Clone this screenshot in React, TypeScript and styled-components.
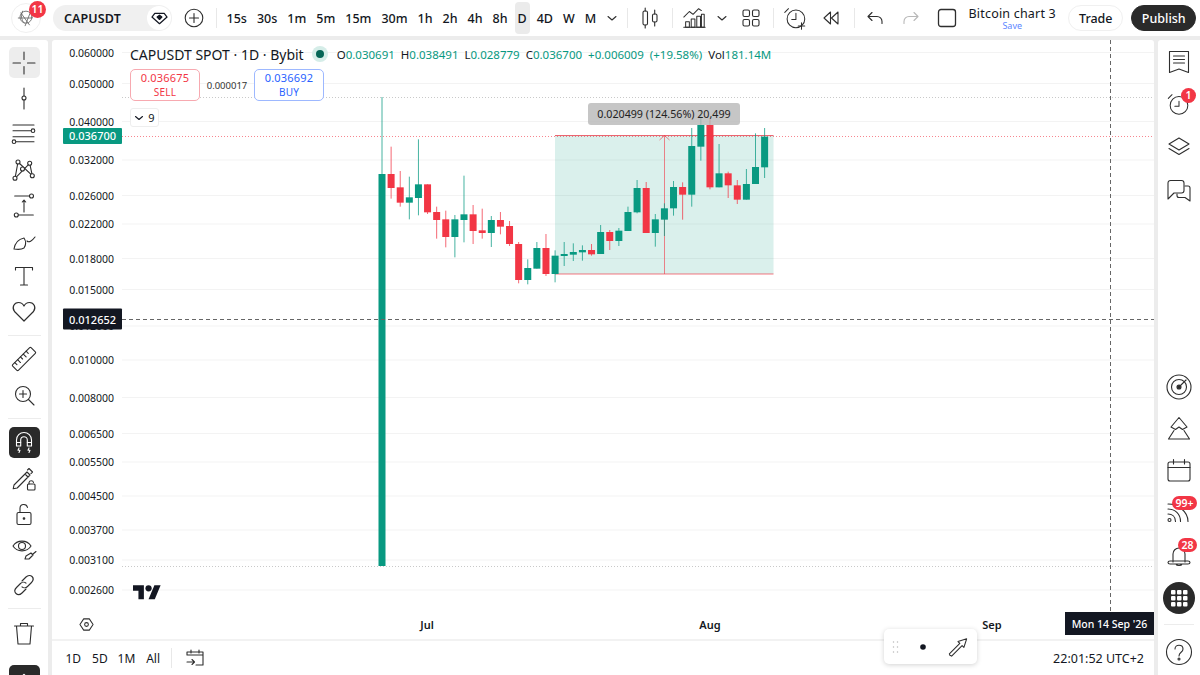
import React from "react";
import styled, { createGlobalStyle } from "styled-components";

const GREEN = "#089981";
const RED = "#f23645";
const INK = "#2e2e2e";
const FONT = `"Noto Sans", "Open Sans", sans-serif`;

// candle values are y positions read off the picture at 3x, relative to y=90
type Candle = [0 | 1, number, number, number, number];
const candles: Candle[] = [
    [1, 252, 1428, 21, 1428],
    [0, 252, 294, 170, 326],
    [0, 292, 338, 243, 350],
    [1, 322, 338, 260, 388],
    [1, 283, 324, 148, 376],
    [0, 283, 367, 283, 372],
    [0, 366, 390, 350, 446],
    [0, 388, 441, 362, 472],
    [1, 388, 441, 375, 502],
    [1, 373, 390, 257, 457],
    [0, 373, 423, 345, 462],
    [0, 421, 429, 356, 446],
    [1, 390, 429, 378, 471],
    [0, 390, 410, 366, 433],
    [0, 408, 462, 393, 468],
    [0, 462, 570, 456, 580],
    [1, 534, 570, 508, 583],
    [1, 474, 536, 456, 536],
    [0, 474, 552, 432, 558],
    [1, 497, 552, 481, 577],
    [1, 492, 498, 456, 528],
    [1, 486, 494, 460, 513],
    [1, 480, 487, 466, 512],
    [0, 480, 493, 462, 497],
    [1, 426, 492, 405, 492],
    [0, 426, 453, 420, 480],
    [1, 422, 453, 414, 468],
    [1, 366, 423, 350, 423],
    [1, 294, 367, 270, 370],
    [0, 294, 429, 276, 429],
    [1, 388, 429, 372, 470],
    [1, 355, 389, 340, 438],
    [1, 291, 355, 273, 377],
    [0, 291, 314, 277, 389],
    [1, 168, 314, 114, 350],
    [1, 105, 170, 60, 212],
    [0, 105, 292, 85, 298],
    [1, 250, 292, 162, 292],
    [0, 250, 286, 245, 324],
    [0, 286, 329, 270, 342],
    [1, 282, 329, 237, 329],
    [1, 231, 282, 130, 282],
    [1, 140, 232, 114, 264],
];

const ticks: [string, number][] = [
    ["0.060000", 52.5],
    ["0.050000", 83.5],
    ["0.040000", 121.5],
    ["0.032000", 160],
    ["0.026000", 195.5],
    ["0.022000", 224],
    ["0.018000", 258.5],
    ["0.015000", 289.5],
    ["0.012000", 326],
    ["0.010000", 360],
    ["0.008000", 397.5],
    ["0.006500", 433.5],
    ["0.005500", 462],
    ["0.004500", 496],
    ["0.003700", 530],
    ["0.003100", 560],
    ["0.002600", 590],
];

const intervals = ["15s", "30s", "1m", "5m", "15m", "30m", "1h", "2h", "4h", "8h", "D", "4D", "W", "M"];

const GlobalStyle = createGlobalStyle`
    html, body {
        margin: 0;
        height: 100%;
        background: #ececec;
        font-family: ${FONT};
        color: #131722;
        overflow: hidden;
    }
`;

const Page = styled.div`
    width: 1200px;
    height: 675px;
    display: flex;
    flex-direction: column;
    gap: 4px;
    background: #ececec;
    overflow: hidden;
`;

const TopBar = styled.header`
    height: 36px;
    flex: none;
    background: #fff;
    display: flex;
    align-items: center;
    font-size: 13px;
`;

const Avatar = styled.div`
    position: relative;
    width: 30px;
    height: 30px;
    margin-left: 11px;
    border-radius: 50%;
    border: 1px solid #f0f0f0;
    box-sizing: border-box;
    display: flex;
    align-items: center;
    justify-content: center;
    color: #666;
`;

const Badge = styled.span<{ $top: number; $right: number; $w: number; $h: number }>`
    position: absolute;
    top: ${(p) => p.$top}px;
    right: ${(p) => p.$right}px;
    min-width: ${(p) => p.$w}px;
    height: ${(p) => p.$h}px;
    border-radius: ${(p) => p.$h / 2}px;
    background: ${RED};
    color: #fff;
    font-size: 10.5px;
    font-weight: 600;
    line-height: ${(p) => p.$h}px;
    text-align: center;
`;

const SymbolPill = styled.div`
    width: 119px;
    height: 26px;
    margin-left: 12px;
    padding-left: 11px;
    box-sizing: border-box;
    border-radius: 13px;
    background: #f0f0f0;
    display: flex;
    align-items: center;
    justify-content: space-between;
    font-size: 12.5px;
    font-weight: 600;
    letter-spacing: 0.1px;
`;

const DiamondCap = styled.span`
    width: 24px;
    height: 24px;
    margin-right: 1px;
    border-radius: 50%;
    background: #fff;
    display: flex;
    align-items: center;
    justify-content: center;
`;

const Slot = styled.div<{ $w: number; $muted?: boolean }>`
    position: relative;
    width: ${(p) => p.$w}px;
    flex: none;
    display: flex;
    align-items: center;
    justify-content: center;
    color: ${(p) => (p.$muted ? "#b8b8b8" : INK)};
`;

const VSep = styled.i<{ $gap?: number }>`
    width: 1px;
    height: 20px;
    flex: none;
    margin: 0 ${(p) => p.$gap ?? 4}px;
    background: #e8e8e8;
`;

const IntervalList = styled.nav`
    display: flex;
    align-items: center;
    height: 100%;
    margin-left: 4.5px;
`;

const Interval = styled.span<{ $active?: boolean }>`
    height: 32px;
    padding: 0 ${(p) => (p.$active ? 3 : 5)}px;
    margin: 0 ${(p) => (p.$active ? 2 : 0)}px;
    border-radius: 4px;
    display: flex;
    align-items: center;
    background: ${(p) => (p.$active ? "#ebebeb" : "transparent")};
    font-weight: 500;
    font-size: 12.5px;
`;

const ChartTitle = styled.div`
    width: 98px;
    flex: none;
    text-align: center;
    line-height: 1;
    font-size: 12.5px;
    letter-spacing: 0.2px;
    white-space: nowrap;
    margin-top: 2px;
    small {
        display: block;
        margin-top: 1px;
        font-size: 9px;
        color: #5d86ff;
        letter-spacing: 0;
    }
`;

const PillButton = styled.button<{ $dark?: boolean; $w: number }>`
    width: ${(p) => p.$w}px;
    height: 26px;
    margin-left: ${(p) => (p.$dark ? 8 : 7)}px;
    padding: 0;
    border-radius: 13px;
    border: 1px solid ${(p) => (p.$dark ? "#2a2a2a" : "#f0f0f0")};
    background: ${(p) => (p.$dark ? "#2a2a2a" : "#fff")};
    color: ${(p) => (p.$dark ? "#fff" : "#131722")};
    font-family: ${FONT};
    font-size: 12.5px;
    font-weight: 500;
`;

const Workspace = styled.div`
    flex: 1;
    min-height: 0;
    display: flex;
    gap: 4px;
`;

const LeftRail = styled.aside`
    width: 48px;
    flex: none;
    background: #fff;
    padding-top: 5px;
    box-sizing: border-box;
    overflow: hidden;
    border-top-right-radius: 3px;
`;

const RailRow = styled.div<{ $dark?: boolean; $active?: boolean }>`
    height: 35.5px;
    display: flex;
    align-items: center;
    justify-content: center;
    color: ${INK};
    > span {
        width: 31px;
        height: 31px;
        border-radius: 5px;
        display: flex;
        align-items: center;
        justify-content: center;
        background: ${(p) => (p.$dark ? "#2a2a2a" : p.$active ? "#ededed" : "transparent")};
        color: ${(p) => (p.$dark ? "#fff" : INK)};
    }
`;

const RailSep = styled.div`
    height: 12.5px;
    display: flex;
    align-items: center;
    justify-content: center;
    &::after {
        content: "";
        width: 33px;
        height: 1px;
        background: #ececec;
    }
`;

const Collapse = styled.span`
    display: flex;
    align-items: flex-start;
    justify-content: center;
    width: 31px;
    height: 31px;
    margin: 14px auto 0;
    padding-top: 5px;
    box-sizing: border-box;
    border-radius: 5px;
    background: #2a2a2a;
    color: #fff;
`;

const ChartColumn = styled.main`
    flex: 1;
    min-width: 0;
    position: relative;
    display: flex;
    flex-direction: column;
    background: #fff;
    border-radius: 3px 3px 0 0;
`;

const ChartBody = styled.div`
    flex: 1;
    min-height: 0;
    display: flex;
`;

const PriceAxis = styled.div`
    position: relative;
    width: 70px;
    flex: none;
    font-size: 10.5px;
`;

const PriceLabel = styled.span`
    position: absolute;
    right: 8px;
    transform: translateY(-50%);
    color: #131722;
`;

const PriceTag = styled.span<{ $bg: string; $h: number }>`
    position: absolute;
    left: 11px;
    right: 0;
    height: ${(p) => p.$h}px;
    border-radius: 1px;
    background: ${(p) => p.$bg};
    color: #fff;
    font-size: 11px;
    font-weight: 500;
    line-height: ${(p) => p.$h}px;
    text-align: center;
    transform: translateY(-50%);
`;

const Pane = styled.div`
    position: relative;
    flex: 1;
    min-width: 0;
    overflow: hidden;
    > svg {
        display: block;
    }
`;

const Legend = styled.div`
    position: absolute;
    top: 4px;
    left: 8px;
    display: flex;
    flex-direction: column;
    align-items: flex-start;
`;

const LegendRow = styled.div`
    display: flex;
    align-items: center;
    height: 20px;
    white-space: nowrap;
`;

const SymbolTitle = styled.span`
    font-size: 14px;
`;

const StatusDot = styled.span`
    width: 16px;
    height: 16px;
    margin: 0 9px 0 8px;
    border-radius: 50%;
    background: #d5ede8;
    display: flex;
    align-items: center;
    justify-content: center;
    &::after {
        content: "";
        width: 8px;
        height: 8px;
        border-radius: 50%;
        background: #056656;
    }
`;

const Ohlc = styled.span`
    font-size: 11.5px;
    margin-right: 6px;
    color: #131722;
    b {
        font-weight: 400;
        color: ${GREEN};
    }
`;

const QuoteRow = styled.div`
    display: flex;
    align-items: center;
    margin-top: 5px;
`;

const QuoteBox = styled.div<{ $color: string; $border: string }>`
    width: 70px;
    height: 32px;
    box-sizing: border-box;
    border: 1px solid ${(p) => p.$border};
    border-radius: 5px;
    background: #fff;
    color: ${(p) => p.$color};
    font-size: 11px;
    line-height: 14px;
    letter-spacing: 0.2px;
    text-align: center;
    display: flex;
    flex-direction: column;
    justify-content: center;
    span {
        font-size: 10px;
    }
`;

const Spread = styled.span`
    width: 54px;
    text-align: center;
    font-size: 9.5px;
    color: #333;
`;

const Collapsed = styled.div`
    margin-top: 7px;
    width: 29px;
    height: 19px;
    box-sizing: border-box;
    border: 1px solid #eee;
    border-radius: 3px;
    background: #fff;
    display: flex;
    align-items: center;
    justify-content: center;
    gap: 4px;
    font-size: 11px;
`;

const MeasureLabel = styled.div`
    position: absolute;
    left: 466px;
    top: 63px;
    width: 152px;
    height: 22px;
    border-radius: 3px;
    background: rgba(182, 182, 182, 0.78);
    font-size: 10.7px;
    line-height: 22px;
    text-align: center;
    color: #222;
`;

const Watermark = styled.svg`
    position: absolute;
    left: 11px;
    top: 542px;
`;

const TimeAxis = styled.div`
    position: relative;
    height: 27px;
    flex: none;
    font-size: 11px;
    font-weight: 600;
`;

const AxisGear = styled.span`
    position: absolute;
    left: 27px;
    top: 5px;
    color: ${INK};
    display: flex;
`;

const TimeLabel = styled.span`
    position: absolute;
    top: 5px;
    transform: translateX(-50%);
`;

const CrossDate = styled.span`
    position: absolute;
    right: 0;
    top: 0;
    width: 89px;
    height: 23px;
    background: #131722;
    color: #fff;
    font-size: 10.5px;
    font-weight: 500;
    line-height: 24px;
    text-align: center;
`;

const RangeBar = styled.footer`
    height: 36px;
    flex: none;
    border-top: 2px solid #f2f2f2;
    box-sizing: border-box;
    display: flex;
    align-items: center;
    padding: 0 10px 0 8px;
    font-size: 12px;
`;

const RangeItem = styled.span`
    width: 26.6px;
    text-align: center;
    flex: none;
`;

const Clock = styled.span`
    margin-left: auto;
    font-size: 12.5px;
`;

const FloatingTools = styled.div`
    position: absolute;
    left: 832px;
    top: 589px;
    width: 93px;
    height: 35px;
    border-radius: 5px;
    background: #fff;
    box-shadow: 0 1px 5px rgba(0, 0, 0, 0.18);
    display: flex;
    align-items: center;
    color: ${INK};
`;

const RightRail = styled.aside`
    width: 42px;
    flex: none;
    background: #fff;
    display: flex;
    flex-direction: column;
    padding-bottom: 2px;
    box-sizing: border-box;
    border-top-left-radius: 3px;
`;

const RightButton = styled.div<{ $h?: number }>`
    position: relative;
    height: ${(p) => p.$h ?? 42.2}px;
    flex: none;
    display: flex;
    align-items: center;
    justify-content: center;
    color: ${INK};
`;

const RailGap = styled.div`
    flex: 1;
`;

const RightSep = styled.div`
    height: 12px;
    display: flex;
    align-items: center;
    justify-content: center;
    &::after {
        content: "";
        width: 30px;
        height: 1px;
        background: #ececec;
    }
`;

const AppsCircle = styled.span`
    width: 32px;
    height: 32px;
    border-radius: 50%;
    background: #2a2a2a;
    color: #fff;
    display: flex;
    align-items: center;
    justify-content: center;
`;

const Icon = ({
    size = 28,
    sw = 1.1,
    box,
    children,
}: {
    size?: number;
    sw?: number;
    box?: string;
    children: React.ReactNode;
}) => (
    <svg
        width={size}
        height={size}
        viewBox={box ?? "0 0 28 28"}
        fill="none"
        stroke="currentColor"
        strokeWidth={sw}
        strokeLinecap="round"
        strokeLinejoin="round"
    >
        {children}
    </svg>
);

const Chevron = () => (
    <Icon size={14} box="0 0 14 14" sw={1.1}>
        <path d="M3 5.5l4 3.5 4-3.5" />
    </Icon>
);

const leftTools: React.ReactNode[] = [
    <Icon key="cross">
        <path d="M3 14h7.5M17.5 14H25M14 3v7.5M14 17.5V25" />
    </Icon>,
    <Icon key="line">
        <path d="M14 4v8M14 16v9" />
        <circle cx="14" cy="14" r="2" />
    </Icon>,
    <Icon key="chan">
        <path d="M3 5h21M3 10.7h18M3 16.7h21M6 21.7h18" />
        <circle cx="23" cy="10.7" r="1.8" />
        <circle cx="4" cy="21.7" r="1.8" />
    </Icon>,
    <Icon key="net">
        <path d="M5 23.3L8 7 22.3 20.7 19.7 8.3 5 23.3z" />
        <circle cx="8" cy="7" r="2" fill="#fff" />
        <circle cx="19.7" cy="8.3" r="2" fill="#fff" />
        <circle cx="12.5" cy="14" r="2" fill="#fff" />
        <circle cx="5" cy="23.3" r="2" fill="#fff" />
        <circle cx="22.3" cy="20.7" r="2" fill="#fff" />
    </Icon>,
    <Icon key="measure">
        <path d="M4.7 5H19M8.3 24h15M14 9v12M12.3 11L14 9l1.7 2" />
        <circle cx="21.5" cy="5" r="2" />
        <circle cx="6.3" cy="24" r="2" />
    </Icon>,
    <Icon key="brush">
        <path d="M4 23c1-6 5-10 10-11 2 3 2 7 0 10-3 2-7 1.500-10 1z" />
        <path d="M17 15c2 2 5 0 8-4" />
    </Icon>,
    <Icon key="text">
        <path d="M5.500 8V5.500h17V8M14 5.500V23M10.500 23h7" />
    </Icon>,
    <Icon key="heart" sw={1.2}>
        <path d="M14 24L4.500 14.500C1.500 10.500 4 5.500 8.500 5.500c2.500 0 4.500 1.500 5.500 3.500 1-2 3-3.500 5.500-3.500 4.500 0 7 5 4 9L14 24z" />
    </Icon>,
];

const RailIcons = {
    ruler: (
        <Icon>
            <g transform="rotate(-45 14 14)">
                <rect x="1" y="10" width="26" height="8" rx="1" />
                <path d="M5 10v3M9 10v4M13 10v3M17 10v4M21 10v3" />
            </g>
        </Icon>
    ),
    zoom: (
        <Icon>
            <circle cx="13" cy="13" r="7.500" />
            <path d="M13 9.500v7M9.500 13h7M18.500 18.500L24 24" />
        </Icon>
    ),
    magnet: (
        <Icon>
            <path d="M6.500 17V11a7.500 7.500 0 0 1 15 0v6h-4.200v-6a3.300 3.300 0 0 0-6.600 0v6z" />
            <path d="M6.500 13.500h4.200M17.300 13.500h4.200M9 19l-1 2.200h2l-1 2.300M19 19l-1 2.200h2l-1 2.300" />
        </Icon>
    ),
    pencilLock: (
        <Icon>
            <path d="M4 21l-.8 3.800 4-.8L20 11l-3-3L4 21zM15 10l3 3M17.500 6l1.500-1.500 3.500 3.500L21 9.500" />
            <rect x="17.500" y="20" width="7.500" height="6" rx="1" />
            <path d="M19 20v-1.500a2.300 2.300 0 0 1 4.500 0" />
        </Icon>
    ),
    lock: (
        <Icon>
            <rect x="7" y="12.500" width="14" height="12" rx="1.500" />
            <path d="M10 12.500V8a3.800 3.800 0 0 1 7.500-.5" />
            <circle cx="14" cy="18.500" r=".8" fill="currentColor" />
        </Icon>
    ),
    eye: (
        <Icon>
            <path d="M3 11c4-6.500 14-6.500 18 0-4 6.500-14 6.500-18 0z" />
            <circle cx="12" cy="11" r="3.500" />
            <path d="M15 24l1-3 5-3 2 2-4 4zM23 19l3-2.500" />
        </Icon>
    ),
    link: (
        <Icon>
            <path d="M12 10l4-4c2-2 4.500-2 6-.5s1.500 4-.5 6l-4 4c-1.500 1.500-4 1.800-5.500.3" />
            <path d="M16 18l-4 4c-2 2-4.500 2-6 .5s-1.500-4 .5-6l4-4c1.500-1.500 4-1.800 5.500-.3" />
        </Icon>
    ),
    trash: (
        <Icon>
            <path d="M4.500 7h19M10.500 7V4.500h7V7M6.500 7l1.500 18h12l1.500-18" />
        </Icon>
    ),
};

const TradingViewMark = () => (
    <Watermark width="28" height="22" viewBox="0 0 36 28" fill="#131722">
        <path d="M14 22H7V11H0V4h14v18z" />
        <path d="M28 22h-8l7.500-18h8L28 22z" />
        <circle cx="20" cy="8" r="4" />
    </Watermark>
);

const AlarmIcon = ({ plus }: { plus?: boolean }) => (
    <Icon size={26}>
        <circle cx="15" cy="15" r="9.500" />
        <path d="M15 9v6.500h-4.500M3 8l4-4" />
        {plus && <path d="M21 19v7M17.500 22.500h7" stroke="currentColor" />}
    </Icon>
);

const grid = Array.from({ length: 9 }, (_, i) => i);

const ChartDrawing = () => {
    const x = (i: number) => 382 + i * 9.11;
    const y = (v: number) => 90 + v / 3;
    return (
        <svg width="1032" height="572" viewBox="122 40 1032 572">
            {ticks.map(([label, at]) => (
                <line key={label} x1="122" x2="1154" y1={at} y2={at} stroke="#f3f3f3" />
            ))}
            <line x1="122" x2="1154" y1="97.500" y2="97.500" stroke="#c9c9c9" strokeDasharray="1 2" />
            <line x1="122" x2="1154" y1="566.500" y2="566.500" stroke="#c9c9c9" strokeDasharray="1 2" />
            <line x1="122" x2="1154" y1="136.500" y2="136.500" stroke={RED} strokeOpacity=".6" strokeDasharray="1 2" />

            <rect x="555" y="135" width="218.500" height="139" fill={GREEN} fillOpacity=".15" />
            <line x1="555" x2="773.500" y1="135.500" y2="135.500" stroke={RED} strokeOpacity=".75" />
            <line x1="555" x2="773.500" y1="274" y2="274" stroke={RED} strokeOpacity=".45" strokeWidth="1.500" />
            <path d="M664.500 274V135.500M659.500 140l5-4.500 5 4.500" stroke={RED} strokeOpacity=".6" fill="none" />

            {candles.map(([up, top, bottom, high, low], i) => {
                const color = up ? GREEN : RED;
                return (
                    <g key={i}>
                        <line x1={x(i)} x2={x(i)} y1={y(high)} y2={y(low)} stroke={color} strokeOpacity=".75" />
                        <rect x={x(i) - 3.500} y={y(top)} width="7" height={y(bottom) - y(top)} fill={color} />
                    </g>
                );
            })}

            <line x1="122" x2="1154" y1="319.500" y2="319.500" stroke="#666" strokeDasharray="4 3" />
            <line x1="1110.500" x2="1110.500" y1="40" y2="612" stroke="#666" strokeDasharray="4 3" />
        </svg>
    );
};

const App = () => (
    <>
        <GlobalStyle />
        <Page>
            <TopBar>
                <Avatar>
                    <Icon size={24} sw={1}>
                        <circle cx="14" cy="13" r="7" />
                        <path d="M8 8l10 14M20 5l-7 18M5 14h16M10 6c-2 4-2 10 2 14" />
                    </Icon>
                    <Badge $top={-3} $right={-6} $w={17} $h={17}>
                        11
                    </Badge>
                </Avatar>
                <SymbolPill>
                    CAPUSDT
                    <DiamondCap>
                        <Icon size={17} box="0 0 18 18" sw={1.3}>
                            <path d="M4 3.500h10l3 4-8 7-8-7z" />
                            <path d="M6.500 7.500L9 10l2.500-2.500L9 5.500z" fill="currentColor" />
                        </Icon>
                    </DiamondCap>
                </SymbolPill>
                <Slot $w={44}>
                    <Icon size={20} box="0 0 20 20" sw={1.1}>
                        <circle cx="10" cy="10" r="8.800" />
                        <path d="M10 5.500v9M5.500 10h9" />
                    </Icon>
                </Slot>
                <VSep $gap={0} />
                <IntervalList>
                    {intervals.map((label) => (
                        <Interval key={label} $active={label === "D"}>
                            {label}
                        </Interval>
                    ))}
                </IntervalList>
                <Slot $w={22}>
                    <Chevron />
                </Slot>
                <VSep />
                <Slot $w={36}>
                    <Icon size={24} box="0 0 24 24">
                        <rect x="5" y="5" width="4.500" height="14" rx="1.500" />
                        <rect x="14.500" y="8" width="4.500" height="8" rx="1.500" />
                        <path d="M7.200 2v3M7.200 19v3M16.700 4v4M16.700 16v4" />
                    </Icon>
                </Slot>
                <VSep />
                <Slot $w={34}>
                    <Icon size={26}>
                        <path d="M3 13l6-6 4 3 6-6 3 2" />
                        <path d="M3 24h23" />
                        <rect x="5" y="18" width="4" height="6" />
                        <rect x="11" y="15" width="4" height="9" />
                        <rect x="17" y="12" width="4" height="12" />
                        <rect x="22" y="10" width="3" height="14" />
                    </Icon>
                </Slot>
                <Slot $w={22}>
                    <Chevron />
                </Slot>
                <Slot $w={36}>
                    <Icon size={22} box="0 0 22 22">
                        <rect x="3" y="3" width="6.500" height="6.500" rx="1.500" />
                        <rect x="12.500" y="3" width="6.500" height="6.500" rx="1.500" />
                        <rect x="3" y="12.500" width="6.500" height="6.500" rx="1.500" />
                        <rect x="12.500" y="12.500" width="6.500" height="6.500" rx="1.500" />
                    </Icon>
                </Slot>
                <VSep />
                <Slot $w={34}>
                    <AlarmIcon plus />
                </Slot>
                <Slot $w={38}>
                    <Icon size={18} box="0 0 18 18">
                        <path d="M8.500 3L2 9l6.500 6V3zM16 3L9.500 9l6.500 6V3z" />
                    </Icon>
                </Slot>
                <VSep />
                <Slot $w={32}>
                    <Icon size={18} box="0 0 18 18">
                        <path d="M6 3.500L2 7.500l4 4M2 7.500h9a5 5 0 0 1 5 5v2" />
                    </Icon>
                </Slot>
                <Slot $w={40} $muted>
                    <Icon size={18} box="0 0 18 18">
                        <path d="M12 3.500l4 4-4 4M16 7.500H7a5 5 0 0 0-5 5v2" />
                    </Icon>
                </Slot>
                <Slot $w={32}>
                    <Icon size={20} box="0 0 20 20" sw={1.3}>
                        <rect x="1.500" y="1.500" width="17" height="17" rx="2.500" />
                    </Icon>
                </Slot>
                <ChartTitle>
                    Bitcoin chart 3<small>Save</small>
                </ChartTitle>
                <PillButton $w={55}>Trade</PillButton>
                <PillButton $w={65} $dark>
                    Publish
                </PillButton>
            </TopBar>

            <Workspace>
                <LeftRail>
                    {leftTools.map((tool, i) => (
                        <RailRow key={i} $active={i === 0}>
                            <span>{tool}</span>
                        </RailRow>
                    ))}
                    <RailSep />
                    <RailRow>
                        <span>{RailIcons.ruler}</span>
                    </RailRow>
                    <RailRow>
                        <span>{RailIcons.zoom}</span>
                    </RailRow>
                    <RailSep />
                    <RailRow $dark>
                        <span>{RailIcons.magnet}</span>
                    </RailRow>
                    <RailRow>
                        <span>{RailIcons.pencilLock}</span>
                    </RailRow>
                    <RailRow>
                        <span>{RailIcons.lock}</span>
                    </RailRow>
                    <RailRow>
                        <span>{RailIcons.eye}</span>
                    </RailRow>
                    <RailRow>
                        <span>{RailIcons.link}</span>
                    </RailRow>
                    <RailSep />
                    <RailRow>
                        <span>{RailIcons.trash}</span>
                    </RailRow>
                    <Collapse>
                        <Icon size={14} box="0 0 14 14" sw={1.4}>
                            <path d="M3 8.500l4-4 4 4" />
                        </Icon>
                    </Collapse>
                </LeftRail>

                <ChartColumn>
                    <ChartBody>
                        <PriceAxis>
                            {ticks.map(([label, at]) => (
                                <PriceLabel key={label} style={{ top: at - 40 }}>
                                    {label}
                                </PriceLabel>
                            ))}
                            <PriceTag $bg={GREEN} $h={16} style={{ top: 96 }}>
                                0.036700
                            </PriceTag>
                            <PriceTag $bg="#131722" $h={21} style={{ top: 278.5 }}>
                                0.012652
                            </PriceTag>
                        </PriceAxis>
                        <Pane>
                            <ChartDrawing />
                            <Legend>
                                <LegendRow>
                                    <SymbolTitle>CAPUSDT SPOT · 1D · Bybit</SymbolTitle>
                                    <StatusDot />
                                    <Ohlc>
                                        O<b>0.030691</b>
                                    </Ohlc>
                                    <Ohlc>
                                        H<b>0.038491</b>
                                    </Ohlc>
                                    <Ohlc>
                                        L<b>0.028779</b>
                                    </Ohlc>
                                    <Ohlc>
                                        C<b>0.036700</b>
                                    </Ohlc>
                                    <Ohlc>
                                        <b>+0.006009</b>
                                    </Ohlc>
                                    <Ohlc>
                                        <b>(+19.58%)</b>
                                    </Ohlc>
                                    <Ohlc>
                                        Vol<b>181.14M</b>
                                    </Ohlc>
                                </LegendRow>
                                <QuoteRow>
                                    <QuoteBox $color={RED} $border="#f7a9b0">
                                        0.036675
                                        <span>SELL</span>
                                    </QuoteBox>
                                    <Spread>0.000017</Spread>
                                    <QuoteBox $color="#2962ff" $border="#9db8ff">
                                        0.036692
                                        <span>BUY</span>
                                    </QuoteBox>
                                </QuoteRow>
                                <Collapsed>
                                    <Icon size={10} box="0 0 10 10" sw={1.1}>
                                        <path d="M1.500 3.500L5 6.500l3.500-3" />
                                    </Icon>
                                    9
                                </Collapsed>
                            </Legend>
                            <MeasureLabel>0.020499 (124.56%) 20,499</MeasureLabel>
                            <TradingViewMark />
                        </Pane>
                    </ChartBody>

                    <TimeAxis>
                        <AxisGear>
                            <Icon size={15} box="0 0 16 16" sw={1.1}>
                                <path d="M5 2h6l4 6-4 6H5L1 8z" />
                                <circle cx="8" cy="8" r="2" />
                            </Icon>
                        </AxisGear>
                        <TimeLabel style={{ left: 375 }}>Jul</TimeLabel>
                        <TimeLabel style={{ left: 658 }}>Aug</TimeLabel>
                        <TimeLabel style={{ left: 940 }}>Sep</TimeLabel>
                        <CrossDate>Mon 14 Sep '26</CrossDate>
                    </TimeAxis>

                    <RangeBar>
                        <RangeItem>1D</RangeItem>
                        <RangeItem>5D</RangeItem>
                        <RangeItem>1M</RangeItem>
                        <RangeItem>All</RangeItem>
                        <VSep $gap={5} />
                        <Slot $w={36}>
                            <Icon size={20} box="0 0 20 20">
                                <path d="M2 7V4h16v13h-7M2 7h16M6 2v3M14 2v3M2 14h7M7 11.500l2.500 2.500L7 16.500" />
                            </Icon>
                        </Slot>
                        <Clock>22:01:52 UTC+2</Clock>
                    </RangeBar>

                    <FloatingTools>
                        <Slot $w={24}>
                            <Icon size={12} box="0 0 12 12" sw={1.100}>
                                <path
                                    d="M3.500 1h.01M7.500 1h.01M3.500 6h.01M7.500 6h.01M3.500 11h.01M7.500 11h.01"
                                    stroke="#bbb"
                                    strokeWidth="1.500"
                                />
                            </Icon>
                        </Slot>
                        <Slot $w={30}>
                            <Icon size={6} box="0 0 6 6" sw={0}>
                                <circle cx="3" cy="3" r="2.800" fill="#131722" />
                            </Icon>
                        </Slot>
                        <Slot $w={39}>
                            <Icon size={20} box="0 0 22 22" sw={1.2}>
                                <path d="M2 20l-.5-1.500L13 7l-2-2 9.500-3-3 9.500-2-2L4 21z" />
                            </Icon>
                        </Slot>
                    </FloatingTools>
                </ChartColumn>

                <RightRail>
                    <RightButton $h={1} />
                    <RightButton>
                        <Icon>
                            <path d="M4.500 3.500h19v21L14 21 4.500 24.500z" />
                            <path d="M8.500 8h11M8.500 11.500h11M8.500 15h11" />
                        </Icon>
                    </RightButton>
                    <RightButton>
                        <Icon size={26}>
                            <circle cx="14" cy="15.500" r="9.500" />
                            <path d="M14 11v5.500H9.500M2.500 8l4-4" />
                        </Icon>
                        <Badge $top={5} $right={4} $w={15} $h={15}>
                            1
                        </Badge>
                    </RightButton>
                    <RightButton>
                        <Icon>
                            <path d="M14 6l10 6-10 6-10-6z" />
                            <path d="M4 16.500l10 6 10-6" />
                        </Icon>
                    </RightButton>
                    <RightButton>
                        <Icon>
                            <path d="M3 24V8a2.500 2.500 0 0 1 2.500-2.500h11A2.500 2.500 0 0 1 19 8v7.500a2.500 2.500 0 0 1-2.500 2.500H9z" />
                            <path d="M20 11h3a2 2 0 0 1 2 2v13l-5-3.500h-6a2 2 0 0 1-2-2V19" />
                        </Icon>
                    </RightButton>
                    <RailGap />
                    <RightButton>
                        <Icon>
                            <circle cx="14" cy="14" r="12" />
                            <circle cx="14" cy="14" r="7.500" />
                            <circle cx="14" cy="14" r="2" fill="currentColor" />
                            <path d="M14 14l7-7" />
                        </Icon>
                    </RightButton>
                    <RightButton>
                        <Icon>
                            <path d="M14 2.500L6 12l4.500 2.500L14 12l3.500 2.500L22 12z" />
                            <path d="M9 15.500L3.500 24h21L19 15.500" />
                        </Icon>
                    </RightButton>
                    <RightButton>
                        <Icon>
                            <rect x="3" y="5" width="22" height="19" rx="2" />
                            <path d="M3 10.500h22M8.500 2.500v4.500M19.500 2.500v4.500" />
                        </Icon>
                    </RightButton>
                    <RightButton>
                        <Icon>
                            <circle cx="4.500" cy="21" r="1.500" />
                            <path d="M3 15c4 0 7.500 2.500 7.500 7.500M3 10c7 0 12.500 5 12.500 12.500M3 5c10 0 20 7.500 20 17.500" />
                        </Icon>
                        <Badge $top={4} $right={3} $w={25} $h={14}>
                            99+
                        </Badge>
                    </RightButton>
                    <RightButton>
                        <Icon>
                            <path d="M8 20V12a6 6 0 0 1 12 0v8M3 20.500c0 1 1 1.500 2 1.500h18c1 0 2-.5 2-1.500s-1-1.500-2-1.500H5c-1 0-2 .500-2 1.500zM11 22c.5 2 5.500 2 6 0" />
                        </Icon>
                        <Badge $top={4} $right={3} $w={19} $h={14}>
                            28
                        </Badge>
                    </RightButton>
                    <RightButton>
                        <AppsCircle>
                            <Icon size={18} box="0 0 18 18" sw={0}>
                                {grid.map((i) => (
                                    <rect
                                        key={i}
                                        x={1 + (i % 3) * 6}
                                        y={1 + Math.floor(i / 3) * 6}
                                        width="4.500"
                                        height="4.500"
                                        rx="1"
                                        fill="currentColor"
                                    />
                                ))}
                            </Icon>
                        </AppsCircle>
                    </RightButton>
                    <RightSep />
                    <RightButton>
                        <Icon>
                            <circle cx="14" cy="14" r="12.500" />
                            <path d="M10 11c0-5 8-5 8 0 0 3.500-4 3-4 7" />
                            <circle cx="14" cy="21" r="1" />
                        </Icon>
                    </RightButton>
                </RightRail>
            </Workspace>
        </Page>
    </>
);

export default App;
